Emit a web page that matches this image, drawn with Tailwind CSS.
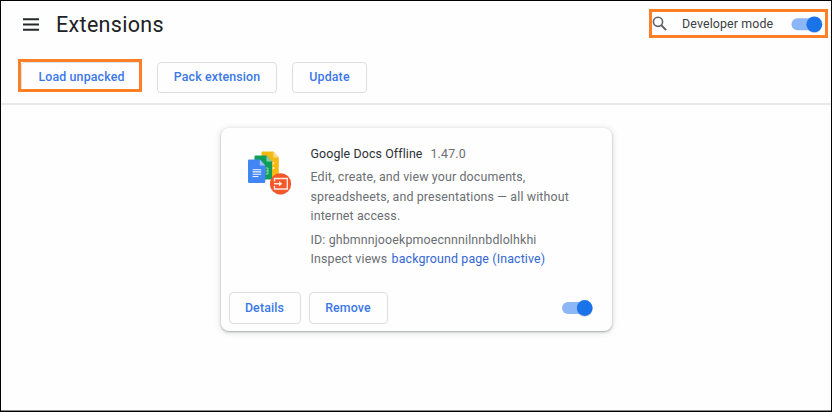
<!DOCTYPE html>
<html lang="en">
<head>
<meta charset="utf-8">
<title>Extensions</title>
<script src="https://cdn.jsdelivr.net/npm/@tailwindcss/browser@4"></script>
</head>
<body class="h-[412px] w-[832px] overflow-hidden bg-black font-[Roboto,sans-serif] text-[12.4px]">
<div class="flex h-[411px] w-[832px] flex-col border-x border-t border-black bg-[#fefefe]">
  <header class="flex h-[58px] shrink-0 items-start pl-[22px] pr-[3px]">
    <svg class="mt-[17px] h-[14px] w-4" viewBox="0 0 16 14" fill="#25272a"><path d="M0 .2h16v2H0zM0 5.500h16v2H0zM0 10.800h16v2H0z"/></svg>
    <h1 class="ml-[17px] mt-[9px] text-[21.5px] leading-[30px] tracking-[0.32px] text-[#202124]">Extensions</h1>
    <div class="ml-auto mt-2 flex h-[29px] w-[179px] items-center border-3 border-[#ff7f27]">
      <svg class="h-[15px] w-[15px]" viewBox="0 0 15 15" fill="none" stroke="#5f6368"><circle cx="6" cy="5.800" r="4.600" stroke-width="1.600"/><path d="M9.300 9.200l4.800 4.900" stroke-width="2"/></svg>
      <span class="ml-[15px] whitespace-nowrap pt-[2px] tracking-[0.13px] text-[#3c4043]">Developer mode</span>
      <svg class="ml-auto mr-[1px] h-[20px] w-[34px]" viewBox="0 0 34 20"><rect x="1.500" y="4.200" width="28" height="12" rx="6" fill="#8cb6f5"/><circle cx="24.300" cy="11" r="8" fill="#9aa8bd" opacity=".5"/><circle cx="24.300" cy="10.300" r="7.900" fill="#1a73e8"/></svg>
    </div>
  </header>
  <nav class="flex h-[46px] shrink-0 items-start border-b-2 border-[#e8e9ea] pl-[17px] font-medium text-[#3b78e7]">
    <div class="h-[33px] w-[124px] border-3 border-[#ff7f27]">
      <button class="h-full w-full rounded-tl border-l border-t border-[#e3e4e7] pl-[2px] pt-[3px] tracking-[0.14px]">Load unpacked</button>
    </div>
    <button class="ml-[15px] mt-[3px] h-[31px] w-[120px] rounded border border-[#dcdee1] tracking-[0.14px]">Pack extension</button>
    <button class="ml-[15px] mt-[3px] h-[31px] w-[75px] rounded border border-[#dcdee1] tracking-[0.14px]">Update</button>
  </nav>
  <main class="flex justify-center pt-[23px]">
    <article class="flex h-[203px] w-[391px] flex-col rounded-lg bg-[#fefefe] shadow-[0_1px_2px_rgba(60,64,67,0.35),0_1px_6px_rgba(60,64,67,0.22)]">
      <div class="flex h-[156px] pl-[26px] pt-[16px]">
        <svg class="mt-[6px] h-[48px] w-[48px]" viewBox="0 0 48 48">
          <path d="M15.500 1.400h10.800l5.500 6v20a1 1 0 0 1-1 1H15.500a1 1 0 0 1-1-1V2.400a1 1 0 0 1 1-1z" fill="#f4b913"/><path d="M26.300 1.400l5.500 6h-5.500z" fill="#f9da84"/>
          <path d="M25.800 12.300h1.600v2h-1.600zM25.800 17h1.600v2h-1.600z" fill="#fff3cc"/>
          <path d="M8.500 5.400H19.500l5.500 6v17a1 1 0 0 1-1 1H8.500a1 1 0 0 1-1-1V6.400a1 1 0 0 1 1-1z" fill="#0f9d58"/><path d="M19.500 5.400l5.500 6h-5.500z" fill="#87ceac"/>
          <path d="M18.500 18h2.500v6h-2.500M18.500 21h2.500" fill="none" stroke="#b7e1cd" stroke-width=".8"/>
          <path d="M2.300 9.400h10.500l5.500 6v16.300a1.300 1.300 0 0 1-1.300 1.300H2.300A1.300 1.300 0 0 1 1 31.700V10.700A1.300 1.300 0 0 1 2.300 9.400z" fill="#4285f4"/><path d="M12.800 9.400l5.500 6h-5.500z" fill="#a1c2fa"/>
          <path d="M5.600 19.700h8.600M5.600 21.900h8.600M5.600 24.200h8.600M5.600 26.500h5.800" stroke="#f1f6ff" stroke-width="1.100"/>
          <circle cx="33.600" cy="34.500" r="10.600" fill="#777" opacity=".25"/><circle cx="33.500" cy="33.800" r="10.600" fill="#f4572a"/>
          <path d="M27.500 31.500V28.500h12.800v10.500H27.500V36M27 33.700h6" fill="none" stroke="#ffe9e1" stroke-width="1.400"/><path d="M32 30.900l3.300 2.800-3.300 2.800z" fill="#ffe9e1"/>
        </svg>
        <div class="ml-[16px] whitespace-nowrap leading-[20px] tracking-[0.14px] text-[#6b6e72]">
          <div class="flex gap-2"><h2 class="tracking-[0.11px] text-[#2d3034]">Google Docs Offline</h2><span>1.47.0</span></div>
          <p class="mt-[3px] leading-[19.5px]">Edit, create, and view your documents,<br>spreadsheets, and presentations — all without<br>internet access.</p>
          <p class="mt-[4px] leading-[19.5px]">ID: ghbmnnjooekpmoecnnnilnnbdlolhkhi<br>Inspect views <a class="ml-px text-[#3367d6]">background page (Inactive)</a></p>
        </div>
      </div>
      <div class="flex items-center pl-2 pr-[17px] pt-2 font-medium text-[#3b78e7]">
        <button class="h-[32px] w-[72px] rounded border border-[#dcdee1] tracking-[0.14px]">Details</button>
        <button class="ml-2 h-[32px] w-[79px] rounded border border-[#dcdee1] tracking-[0.14px]">Remove</button>
        <svg class="ml-auto h-[20px] w-[34px]" viewBox="0 0 34 20"><rect x="1" y="4" width="28" height="12" rx="6" fill="#8cb6f5"/><circle cx="23.700" cy="10.800" r="8" fill="#9aa8bd" opacity=".5"/><circle cx="23.700" cy="10" r="7.900" fill="#1a73e8"/></svg>
      </div>
    </article>
  </main>
  <div class="mt-auto h-px bg-[#8c8c8c]"></div>
</div>
</body>
</html>
